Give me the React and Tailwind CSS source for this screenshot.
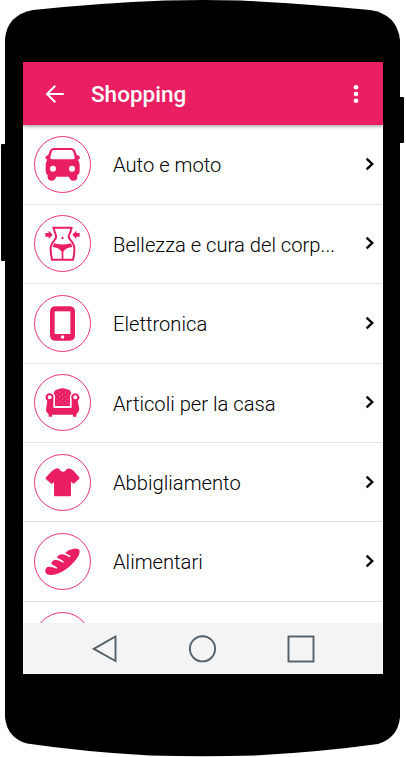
import React from 'react';

const CarIcon = () => (
  <>
    <path fillRule="evenodd" d="M103 69H152Q162 69 166 78L170 90Q179 91 180 98Q180 103 173 104Q179 110 179 121V139Q179 148 172 150V158Q171 167 160 167Q149 166 147 155H108Q106 166 95 167Q84 166 83 158V150Q77 147 77 139V121Q77 110 82 104Q76 103 76 98Q77 91 85 90L89 78Q93 69 103 69ZM102 75Q97 75 95 80L91 97Q90 103 96 103H159Q165 103 164 97L160 80Q158 75 153 75Z" />
    <circle cx="99" cy="131" r="9" fill="white" />
    <circle cx="156" cy="131" r="9" fill="white" />
  </>
);

const BodyIcon = () => (
  <>
    <path fill="none" stroke="currentColor" strokeWidth="6" d="M97 71H158M101 71Q103 83 107 91Q111 102 103 109Q91 121 92 138Q93 153 96 167H159Q163 153 163 138Q164 121 152 109Q143 101 148 91Q153 83 154 71" />
    <path d="M102 118Q127 125 153 118L157 129Q139 130 130 143V165H125V143Q116 130 98 129Z" />
    <circle cx="127.5" cy="102" r="3.5" />
    <path d="M76 87H86V80L98 92L86 105V98H76ZM179 87H169V80L157 92L169 105V98H179Z" />
  </>
);

const TabletIcon = () => (
  <>
    <rect x="90" y="67" width="75" height="103" rx="15" />
    <rect x="104" y="82" width="47" height="68" fill="white" />
    <circle cx="127.5" cy="159" r="5.5" fill="white" />
  </>
);

const ArmchairIcon = () => (
  <>
    <path d="M104 84Q108 80 115 79Q127 73 140 79Q148 80 151 84L154 91Q148 98 150 107V129H105V107Q107 98 101 91Z" />
    <path fillRule="evenodd" d="M89 91A12 12 0 0 1 100 108V135H155V108A12 12 0 1 1 173 113L178 139Q177 149 169 154V161H159V155H96V161H86V154Q78 149 78 140L82 113A12 12 0 0 1 89 91ZM89 97A6 6 0 1 0 89 109A6 6 0 0 0 89 97ZM166 97A6 6 0 1 0 166 109A6 6 0 0 0 166 97Z" />
    <g fill="#f9a9c3">
      {[[119, 87], [136, 87], [111, 94], [127, 94], [144, 94], [119, 101], [136, 101], [111, 108], [127, 108], [144, 108], [119, 115], [136, 115], [111, 121], [127, 121], [144, 121]].map(([x, y]) => (
        <circle key={`${x}-${y}`} cx={x} cy={y} r="1.5" />
      ))}
    </g>
  </>
);

const ShirtIcon = () => (
  <path d="M107 77Q112 74 118 78Q122 87 130 86Q137 86 140 78Q144 75 150 77Q157 79 162 85L177 102Q180 105 177 108L164 120Q161 123 158 120L153 116V156Q153 160 149 160H106Q102 160 102 156V117L98 121Q95 124 92 121L78 109Q75 106 78 103L95 85Q101 79 107 77Z" />
);

const BreadIcon = () => (
  <path d="M161 80Q177 77 179 88Q180 99 164 118Q140 146 111 156Q85 164 77 153Q73 143 82 135Q94 133 110 140L112 137Q103 131 94 126Q93 119 104 113Q117 113 129 122L132 119Q123 112 111 107Q114 98 127 97Q138 98 149 106L152 102Q143 97 136 93Q144 83 161 80Z" />
);

const categories = [
  { name: 'Auto e moto', icon: CarIcon },
  { name: 'Bellezza e cura del corp...', icon: BodyIcon },
  { name: 'Elettronica', icon: TabletIcon },
  { name: 'Articoli per la casa', icon: ArmchairIcon },
  { name: 'Abbigliamento', icon: ShirtIcon },
  { name: 'Alimentari', icon: BreadIcon },
];

function CategoryBadge({ icon: Icon }) {
  return (
    <svg className="h-[57px] w-[57px] shrink-0 text-[#e91e63]" viewBox="42 33 171 171" fill="currentColor">
      <circle cx="127.5" cy="118.5" r="84" fill="none" stroke="currentColor" strokeWidth="2.7" />
      {Icon && <Icon />}
    </svg>
  );
}

function CategoryRow({ name, icon }) {
  return (
    <li className="flex h-[79.4px] shrink-0 items-center border-b border-[#e4e4e4] pl-[11px] pr-2">
      <CategoryBadge icon={icon} />
      <span className="ml-[22px] mt-0.5 flex-1 whitespace-nowrap text-[20.2px] font-light text-black">{name}</span>
      <svg className="mb-px h-[14px] w-[10px]" viewBox="0 0 10 14" fill="none" stroke="black" strokeWidth="2.4">
        <path d="M1.6 1.6L7.2 7L1.6 12.4" />
      </svg>
    </li>
  );
}

// black phone body with the side buttons
function PhoneShell() {
  return (
    <svg className="absolute inset-0 h-[757px] w-[406px]" viewBox="0 0 406 757">
      <path d="M5 39Q7 15 33 10Q100 3 165 0.5Q203 -0.5 241 0.5Q310 4 370 10Q397 14 400 40V717Q398 738 378 744Q320 752 255 755.5Q203 757 150 755.5Q85 752 27 743.5Q7 738 5 717Z" />
      <rect x="1" y="144" width="6" height="117" rx="1" />
      <rect x="398" y="97" width="6" height="46" rx="1" />
    </svg>
  );
}

export default function App() {
  return (
    <div className="relative h-[757px] w-[406px] overflow-hidden bg-white pl-[23px] pt-[62px] font-[Roboto,sans-serif]">
      <PhoneShell />
      <div className="relative flex h-[612px] w-[360px] flex-col overflow-hidden bg-white">
        <header className="z-10 flex h-[63px] shrink-0 items-center bg-[#e91e63] pl-5 pr-[15px] text-white shadow-[0_1px_4px_rgba(0,0,0,0.45)]">
          <svg className="h-6 w-6" viewBox="0 0 24 24" fill="none" stroke="currentColor" strokeWidth="2">
            <path d="M20.7 12H4M12.3 3.8L4 12L12.3 20.2" />
          </svg>
          <h1 className="ml-6 mt-0.5 flex-1 text-[22.5px] font-medium">Shopping</h1>
          <svg className="h-6 w-6" viewBox="0 0 24 24" fill="currentColor">
            <circle cx="12" cy="5.2" r="2.3" />
            <circle cx="12" cy="12" r="2.3" />
            <circle cx="12" cy="18.8" r="2.3" />
          </svg>
        </header>

        <ul className="flex min-h-0 flex-1 flex-col overflow-hidden pt-[0.4px]">
          {categories.map((category) => (
            <CategoryRow key={category.name} {...category} />
          ))}
          <CategoryRow name="" />
        </ul>

        <nav className="flex h-[51px] shrink-0 items-center bg-[#f4f4f4] pl-[69px]">
          <svg className="h-7 w-[224px]" viewBox="0 0 224 28" fill="none" stroke="#536069" strokeWidth="1.9">
            <path d="M1.8 13.8L23.5 1.5V26Z" />
            <circle cx="110.5" cy="13.8" r="12.6" />
            <rect x="196.5" y="1.5" width="25" height="25" />
          </svg>
        </nav>
      </div>
    </div>
  );
}
